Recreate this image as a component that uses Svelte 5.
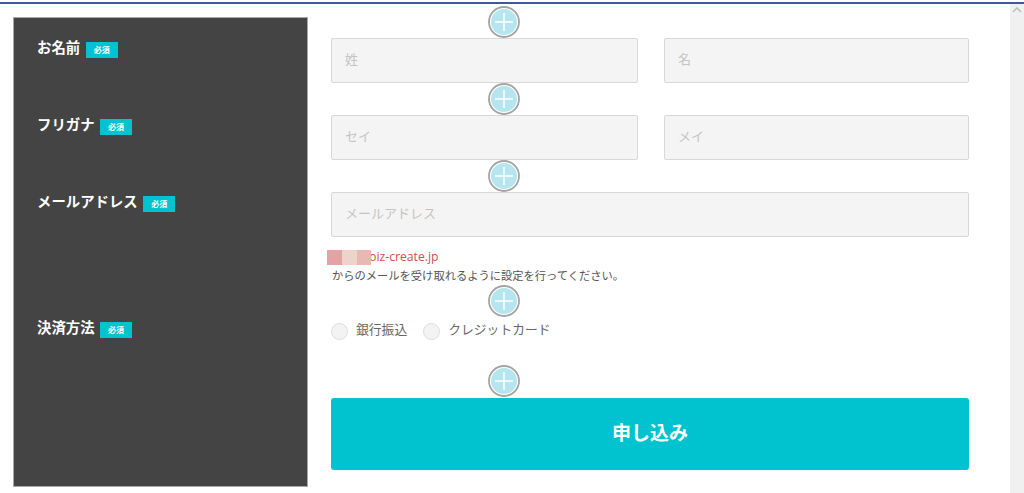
<script>
	const labels = [
		{ text: 'お名前', gap: 57 },
		{ text: 'フリガナ', gap: 57 },
		{ text: 'メールアドレス', gap: 106 },
		{ text: '決済方法', gap: 0 }
	];

	const plusTops = [-11, 66, 143, 268, 348];
</script>

{#snippet plus(top)}
	<svg class="plus" style="top: {top}px" width="32" height="32" viewBox="0 0 32 32" aria-hidden="true">
		<circle cx="16" cy="16" r="15" fill="#fff" stroke="#a3a3a3" stroke-width="1.8" />
		<circle cx="16" cy="16" r="13" fill="#b5e5ee" />
		<path d="M16 7v18M7 16h18" stroke="#fff" stroke-width="1.5" fill="none" />
	</svg>
{/snippet}

<div class="topline"></div>
<div class="page">
	<main class="content">
		<aside class="labels">
			{#each labels as label}
				<div class="label" style="margin-bottom: {label.gap}px">
					<span>{label.text}</span>
					<em class="required">必須</em>
				</div>
			{/each}
		</aside>

		<form class="fields" onsubmit={(e) => e.preventDefault()}>
			{#each plusTops as top}
				{@render plus(top)}
			{/each}

			<div class="row">
				<input type="text" placeholder="姓" />
				<input type="text" placeholder="名" />
			</div>
			<div class="row">
				<input type="text" placeholder="セイ" />
				<input type="text" placeholder="メイ" />
			</div>
			<div class="row">
				<input type="text" placeholder="メールアドレス" />
			</div>

			<div class="notice">
				<div class="mail">
					<span class="mask"><i></i><i></i><i></i></span>biz-create.jp
				</div>
				<div class="note">からのメールを受け取れるように設定を行ってください。</div>
			</div>

			<div class="radios">
				<label><span class="radio"></span><span class="radio-text">銀行振込</span></label>
				<label><span class="radio"></span><span class="radio-text">クレジットカード</span></label>
			</div>

			<button type="submit">申し込み</button>
		</form>
	</main>
	<div class="scrollbar">
		<svg width="10" height="6" viewBox="0 0 10 6" aria-hidden="true">
			<path d="M1 5l4-4 4 4" stroke="#bdbdbd" stroke-width="1.6" fill="none" />
		</svg>
	</div>
</div>

<style>
	:global(body) {
		margin: 0;
		background: #fff;
		overflow: hidden;
		font-family: 'Noto Sans CJK JP', 'Open Sans', sans-serif;
	}

	.topline {
		height: 2px;
		margin-top: 2px;
		background: #3b5a9a;
	}

	.page {
		display: flex;
		height: 489px;
	}

	.content {
		flex: 1;
		display: flex;
		align-items: flex-start;
		padding: 13px 0 0 13px;
		gap: 23px;
	}

	.labels {
		width: 295px;
		height: 470px;
		box-sizing: border-box;
		padding: 19px 0 0 23px;
		background: #444;
		border: 1px solid #a8a8a8;
		color: #fff;
	}

	.label {
		display: flex;
		align-items: center;
		gap: 5.5px;
		height: 20px;
		font-size: 14.4px;
		font-weight: 700;
		line-height: 20px;
	}

	.required {
		width: 32px;
		height: 16px;
		margin-top: 5px;
		background: #00c3cf;
		font-size: 8px;
		font-style: normal;
		font-weight: 700;
		line-height: 16px;
		text-align: center;
	}

	.fields {
		position: relative;
		width: 638px;
		padding-top: 21px;
		font-size: 11.28px;
		color: #555;
	}

	.plus {
		position: absolute;
		left: 157px;
		z-index: 1;
	}

	.row {
		display: flex;
		gap: 26px;
		margin-bottom: 32px;
	}

	input {
		flex: 1;
		min-width: 0;
		height: 45px;
		box-sizing: border-box;
		padding: 0 13px 4px;
		border: 1px solid #d8d8d8;
		border-radius: 2px;
		background: #f4f4f4;
		font: inherit;
		font-size: 13px;
	}

	input:first-child:not(:only-child) {
		flex: 0 0 307px;
	}

	input::placeholder {
		color: #c4c4c4;
	}

	.notice {
		margin-top: -21px;
		line-height: 18px;
	}

	.mail {
		color: #d0504c;
		font-family: 'Open Sans', 'Noto Sans CJK JP', sans-serif;
		font-size: 12.2px;
		display: flex;
		align-items: center;
		margin-left: -4px;
	}

	.mask {
		display: flex;
		height: 15px;
		margin-right: -2px;
		position: relative;
		z-index: 1;
	}

	.mask i {
		width: 15px;
		background: #e3a3a5;
	}

	.mask i:nth-child(2) {
		background: #eed3cd;
	}

	.mask i:nth-child(3) {
		width: 14px;
		background: #e8b8b2;
	}

	.note {
		margin-left: 1px;
		white-space: nowrap;
	}

	.radios {
		display: flex;
		gap: 16px;
		margin-top: 34px;
		height: 80px;
		font-size: 12.8px;
		color: #666;
	}

	.radios label {
		display: flex;
		align-items: flex-start;
		gap: 8px;
	}

	.radio {
		width: 17px;
		height: 17px;
		box-sizing: border-box;
		margin-top: 5px;
		border: 1px solid #ddd;
		border-radius: 50%;
		background: #f3f3f3;
	}

	.radio-text {
		margin-top: 1px;
		line-height: 20px;
	}

	button {
		display: block;
		width: 100%;
		height: 72px;
		padding-bottom: 7px;
		border: 0;
		border-radius: 3px;
		background: #00c3cf;
		color: #fff;
		font: inherit;
		font-size: 19px;
		font-weight: 700;
	}

	.scrollbar {
		width: 14px;
		display: flex;
		justify-content: center;
		align-items: flex-start;
		padding-top: 3px;
		background: #f0f0f0;
		box-sizing: border-box;
	}
</style>
